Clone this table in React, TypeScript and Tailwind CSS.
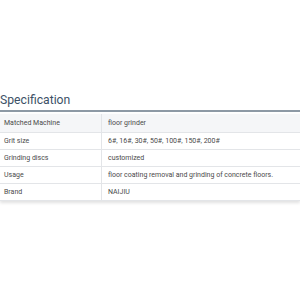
export default function App() {
  const rows: [string, string][] = [
    ["Matched Machine", "floor grinder"],
    ["Grit size", "6#, 16#, 30#, 50#, 100#, 150#, 200#"],
    ["Grinding discs", "customized"],
    ["Usage", "floor coating removal and grinding of concrete floors."],
    ["Brand", "NAIJIU"],
  ];
  return (
    <div className="w-[300px] h-[300px] bg-white pt-[92px]" style={{ fontFamily: "Roboto, 'Liberation Sans', sans-serif" }}>
      <h2 className="text-[12.2px] leading-[16px] text-[#3d5166] mb-[2px]">Specification</h2>
      <div className="h-[2px] bg-[#8d99a5]" />
      <div className="mt-[2px] shadow-[0_2px_3px_rgba(0,0,0,0.12)]">
        {rows.map(([k, v], i) => (
          <div
            key={k}
            className={`flex text-[7px] text-[#4a4a4a] border-b border-[#e3e5e8] ${i === 0 ? "bg-[#f5f6f8] h-[19px]" : "bg-white h-[17px]"}`}
          >
            <div className="w-[102px] pl-[4px] flex items-center border-r border-[#e3e5e8]">{k}</div>
            <div className="flex-1 pl-[6px] flex items-center">{v}</div>
          </div>
        ))}
      </div>
    </div>
  );
}
